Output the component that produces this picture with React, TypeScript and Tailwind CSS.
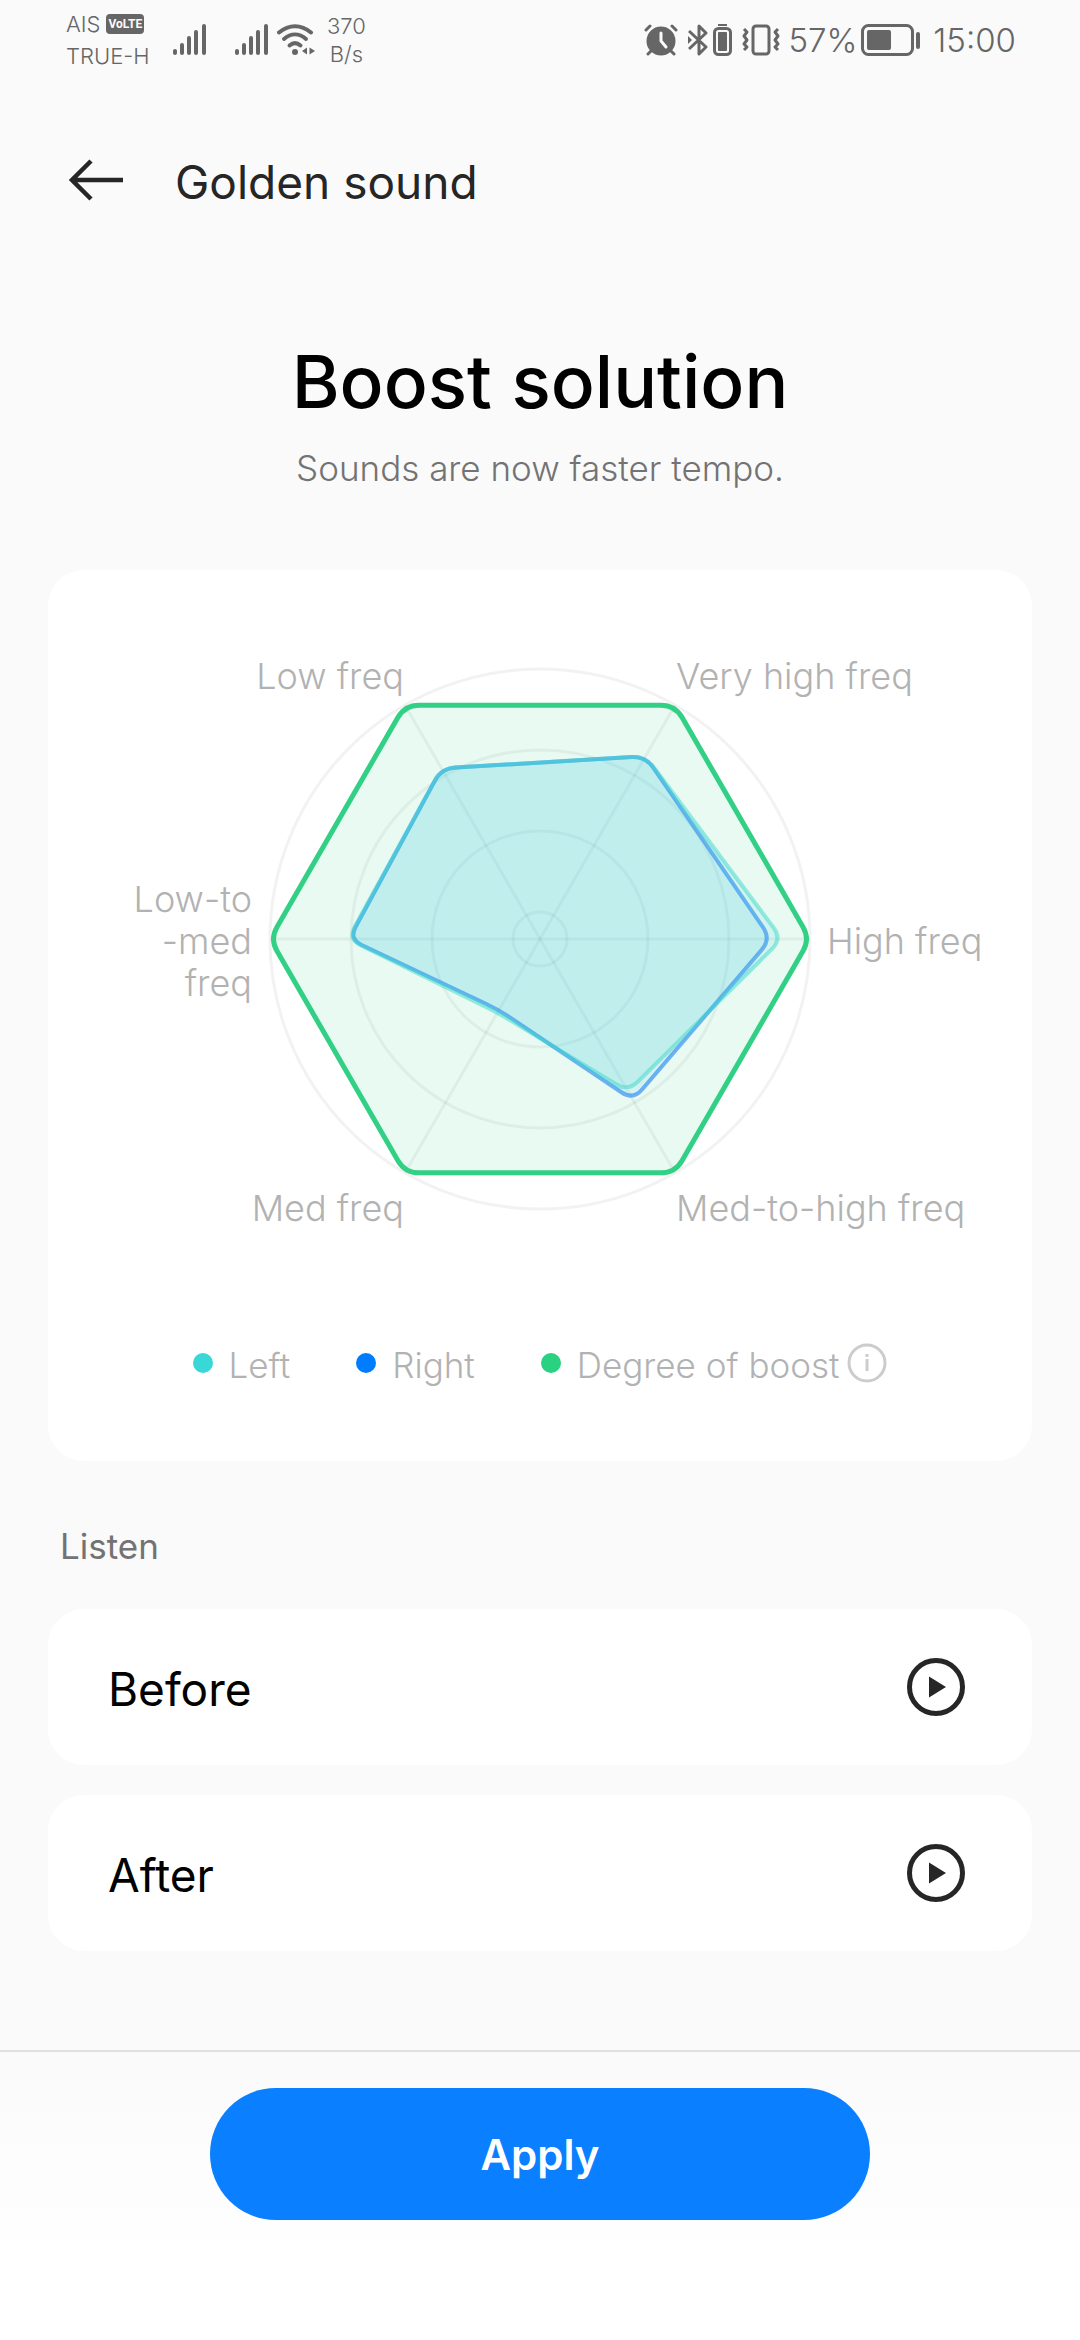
import { useState } from 'react'

type Point = [number, number]

interface Series {
  values: number[]
  fill: string
  stroke: string
}

const CX = 492
const CY = 369
const RADIUS = 270
const RINGS = [27, 108, 189, 270]
// clockwise from the right: high, med-to-high, med, low-to-med, low, very high
const ANGLES = [0, 60, 120, 180, 240, 300]

const boost = [270, 270, 270, 270, 270, 270]

// right ear is drawn first so the left one stays on top
const ears: Series[] = [
  { values: [231, 186, 82, 191, 197, 211], fill: 'fill-[#3ac4f0]/12', stroke: 'stroke-[#1c80f4]/60' },
  { values: [242, 176, 85, 192, 197, 211], fill: 'fill-[#3ad0e0]/12', stroke: 'stroke-[#3ad7ca]/50' },
]

const axisLabels = [
  { lines: ['Low freq'], x: 356, y: 119, end: true },
  { lines: ['Very high freq'], x: 628, y: 119, end: false },
  { lines: ['Low-to', '-med', 'freq'], x: 204, y: 342, end: true },
  { lines: ['High freq'], x: 779, y: 384, end: false },
  { lines: ['Med freq'], x: 356, y: 651, end: true },
  { lines: ['Med-to-high freq'], x: 628, y: 651, end: false },
]

const legend = [
  { label: 'Left', dot: 'bg-[#3ad7d7]' },
  { label: 'Right', dot: 'bg-[#007dff]' },
  { label: 'Degree of boost', dot: 'bg-[#2ad181]' },
]

function toPoint(r: number, angle: number): Point {
  const a = (angle * Math.PI) / 180
  return [CX + r * Math.cos(a), CY + r * Math.sin(a)]
}

function toward([x1, y1]: Point, [x2, y2]: Point, d: number) {
  const len = Math.hypot(x2 - x1, y2 - y1)
  return `${x1 + ((x2 - x1) * d) / len} ${y1 + ((y2 - y1) * d) / len}`
}

// closed polygon with softened corners
function roundedPath(values: number[], corner = 14) {
  const pts = values.map((v, i) => toPoint(v, ANGLES[i]))
  const parts = pts.map((p, i) => {
    const prev = pts[(i + pts.length - 1) % pts.length]
    const next = pts[(i + 1) % pts.length]
    return `${i === 0 ? 'M' : 'L'} ${toward(p, prev, corner)} Q ${p[0]} ${p[1]} ${toward(p, next, corner)}`
  })
  return parts.join(' ') + ' Z'
}

function SignalIcon() {
  return (
    <svg viewBox="0 0 34 32" className="w-[34px] h-8 fill-current">
      <rect x="0" y="25" width="4" height="6" rx="2" />
      <rect x="7" y="19" width="4" height="12" rx="2" />
      <rect x="14" y="12" width="4" height="19" rx="2" />
      <rect x="21" y="6" width="4" height="25" rx="2" />
      <rect x="29" y="0" width="4" height="31" rx="2" />
    </svg>
  )
}

function WifiIcon() {
  return (
    <svg viewBox="0 0 38 32" className="w-[38px] h-8 fill-none stroke-current" strokeWidth="4" strokeLinecap="round">
      <path d="M2 8.5C12 0 24 0 34 8.5" />
      <path d="M7 15C14 9 22 9 29 15" />
      <path d="M12.500 21.500C16 18.500 20 18.500 23.500 21.500" />
      <circle cx="18" cy="28" r="3" className="fill-current stroke-none" />
      <path d="M30 23.500V30.500L25 27ZM32.500 23.500V30.500L38 27Z" className="fill-current stroke-none" />
    </svg>
  )
}

function AlarmIcon() {
  return (
    <svg viewBox="0 0 34 32" className="w-[34px] h-8 fill-none stroke-current" strokeWidth="3" strokeLinecap="round">
      <circle cx="17" cy="17" r="14.500" className="fill-current stroke-none" />
      <path d="M2 6L6 2M28 2L32 6M7 27L4 30M27 27L30 30" />
      <path d="M17 9V17L22 23" className="stroke-[#fafafa]" />
    </svg>
  )
}

function BluetoothIcon() {
  return (
    <svg viewBox="0 0 21 32" className="w-[21px] h-8 fill-none stroke-current" strokeWidth="3" strokeLinejoin="round">
      <path d="M1 7L18 23L11 30V2L18 9L1 25" />
      <path d="M0 12L4 16L0 20Z" className="fill-current stroke-none" />
    </svg>
  )
}

function DeviceBatteryIcon() {
  return (
    <svg viewBox="0 0 19 32" className="w-[19px] h-8 fill-none stroke-current" strokeWidth="2">
      <path d="M5 1H14" />
      <rect x="1.500" y="4.500" width="16" height="26" rx="4" strokeWidth="3" />
      <rect x="5" y="8" width="9" height="19" rx="1" className="fill-current stroke-none" />
    </svg>
  )
}

function VibrateIcon() {
  return (
    <svg viewBox="0 0 38 32" className="w-[38px] h-8 fill-none stroke-current" strokeWidth="3" strokeLinejoin="round">
      <rect x="11" y="2" width="16" height="28" rx="3" />
      <path d="M2 5L5 8L2 12L5 16L2 20L5 23L2 26" />
      <path d="M36 5L33 8L36 12L33 16L36 20L33 23L36 26" />
    </svg>
  )
}

function BatteryIcon() {
  return (
    <svg viewBox="0 0 60 32" className="w-[60px] h-8 fill-none stroke-current" strokeWidth="3">
      <rect x="1.500" y="1.500" width="50" height="29" rx="6" />
      <rect x="6" y="6" width="24" height="20" rx="2" className="fill-current stroke-none" />
      <rect x="55" y="8" width="4" height="17" rx="2" className="fill-current stroke-none" />
    </svg>
  )
}

function StatusBar() {
  return (
    <div className="flex items-center justify-between h-20 pl-[66px] pr-16 text-[#666666] font-light">
      <div className="flex items-center">
        <div className="w-[107px] text-[22px] leading-8">
          <div className="flex items-center gap-1.5">
            AIS
            <span className="rounded bg-[#666666] px-0.5 text-xs leading-5 font-bold text-[#fafafa] font-['Roboto',sans-serif]">VoLTE</span>
          </div>
          <div>TRUE-H</div>
        </div>
        <SignalIcon />
        <div className="flex items-center gap-2 pl-7">
          <SignalIcon />
          <WifiIcon />
        </div>
        <div className="pl-3 text-center text-[22px] leading-7">
          <div>370</div>
          <div>B/s</div>
        </div>
      </div>
      <div className="flex items-center text-[33px] leading-8">
        <AlarmIcon />
        <div className="flex items-center gap-1 px-2.5">
          <BluetoothIcon />
          <DeviceBatteryIcon />
        </div>
        <VibrateIcon />
        <span className="pl-2 pr-1">57%</span>
        <BatteryIcon />
        <span className="pl-3">15:00</span>
      </div>
    </div>
  )
}

function RadarChart() {
  return (
    <svg viewBox="0 0 984 738" className="w-full fill-none" role="img" aria-label="Frequency boost chart">
      <g className="stroke-black/5" strokeWidth="3">
        {RINGS.map(r => <circle key={r} cx={CX} cy={CY} r={r} />)}
        {ANGLES.map(a => {
          const [x, y] = toPoint(RADIUS, a)
          return <line key={a} x1={CX} y1={CY} x2={x} y2={y} />
        })}
      </g>
      <path d={roundedPath(boost)} className="fill-[#2ad181]/11 stroke-[#32d085]" strokeWidth="5" />
      {ears.map(s => (
        <path key={s.stroke} d={roundedPath(s.values)} className={`${s.fill} ${s.stroke}`} strokeWidth="4" />
      ))}
      <g className="fill-[#b2b2b2] text-[36px] font-light">
        {axisLabels.map(({ lines, x, y, end }) => (
          <text key={lines.join('')} textAnchor={end ? 'end' : 'start'}>
            {lines.map((line, i) => <tspan key={line} x={x} y={y + i * 42}>{line}</tspan>)}
          </text>
        ))}
      </g>
    </svg>
  )
}

function ListenRow({ label, active, onPlay }: { label: string; active: boolean; onPlay: () => void }) {
  return (
    <li className="flex items-center justify-between h-[156px] rounded-[36px] bg-white pl-[60px] pr-[67px]">
      <span className="pt-1 text-[46px] leading-[60px] text-black">{label}</span>
      <button type="button" aria-label={`Play ${label}`} aria-pressed={active} onClick={onPlay}>
        <svg viewBox="0 0 58 58" className="w-[58px] h-[58px] fill-none stroke-[#262626]" strokeWidth="5">
          <circle cx="29" cy="29" r="26.500" />
          <path d="M22 18.500L39 29L22 39.500Z" className="fill-[#262626] stroke-none" />
        </svg>
      </button>
    </li>
  )
}

export default function App() {
  const [playing, setPlaying] = useState<string | null>(null)

  return (
    <div className="flex flex-col min-h-screen bg-[#fafafa] font-['Inter',sans-serif]">
      <StatusBar />

      <header className="flex items-center gap-[52px] h-[200px] px-[69px]">
        <button type="button" aria-label="Back">
          <svg viewBox="0 0 54 42" className="w-[54px] h-[42px] fill-none stroke-[#262626]" strokeWidth="4.500">
            <path d="M54 21H4M22 2L3 21L22 40" />
          </svg>
        </button>
        <h1 className="pt-1 text-[46px] leading-[60px] text-[#262626]">Golden sound</h1>
      </header>

      <main className="flex-1 px-12">
        <div className="pt-[52px] pb-[77px] text-center">
          <h2 className="text-[73px] leading-[100px] font-medium text-black">Boost solution</h2>
          <p className="pt-[11px] text-[35px] leading-[50px] font-light text-[#737373]">Sounds are now faster tempo.</p>
        </div>

        {/* Chart card */}
        <section className="rounded-[36px] bg-white pb-[75px]">
          <RadarChart />
          <div className="flex items-center justify-center gap-[66px] pt-8 text-[35px] leading-[42px] font-light text-[#b2b2b2]">
            {legend.map(({ label, dot }, i) => (
              <div key={label} className="flex items-center">
                <span className={`w-5 h-5 mr-4 rounded-full ${dot}`} />
                <span className="pt-1">{label}</span>
                {i === legend.length - 1 && (
                  <button type="button" aria-label="About degree of boost" className="ml-2">
                    <svg viewBox="0 0 40 40" className="w-10 h-10 fill-none stroke-[#cccccc]" strokeWidth="3">
                      <circle cx="20" cy="20" r="18" />
                      <path d="M20 16V28M20 11V14" />
                    </svg>
                  </button>
                )}
              </div>
            ))}
          </div>
        </section>

        <h3 className="px-3 pt-[60px] pb-[38px] text-[35px] leading-[50px] text-[#737373]">Listen</h3>
        <ul className="flex flex-col gap-[30px]">
          {['Before', 'After'].map(label => (
            <ListenRow
              key={label}
              label={label}
              active={playing === label}
              onPlay={() => setPlaying(playing === label ? null : label)}
            />
          ))}
        </ul>
      </main>

      <footer className="flex justify-center border-t-2 border-[#e0e0e0] bg-gradient-to-b from-[#fafafa] to-white to-75% pt-9 pb-[120px]">
        <button type="button" className="w-[660px] h-[132px] rounded-full bg-[#0a7fff] text-[42px] font-semibold text-white">
          Apply
        </button>
      </footer>
    </div>
  )
}
